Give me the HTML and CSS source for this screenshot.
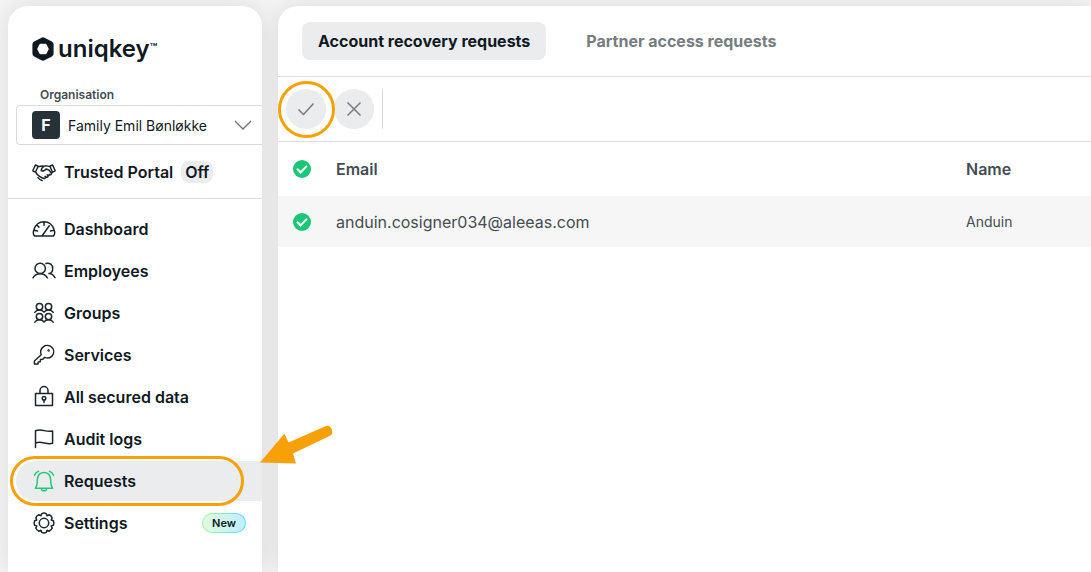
FILE: index.html
```html
<!DOCTYPE html>
<html lang="en">
<head>
<meta charset="utf-8">
<meta name="viewport" content="width=device-width, initial-scale=1">
<title>Uniqkey – Requests</title>
<link rel="stylesheet" href="styles.css">
</head>
<body>
<div class="app">
  <aside class="sidebar">
    <div class="logo">
      <svg class="logo-mark" viewBox="0 0 22 24" aria-hidden="true">
        <path fill="currentColor" fill-rule="evenodd" d="M9 .9a4 4 0 0 1 4 0l6.900 3.700A3.500 3.500 0 0 1 21.600 7.700v8.600a3.500 3.500 0 0 1-1.700 3.100L13 23.100a4 4 0 0 1-4 0L2.100 19.400A3.500 3.500 0 0 1 .4 16.300V7.700a3.500 3.500 0 0 1 1.700-3.100zM8.500 6.800Q7.800 6.900 7.400 7.600L5.500 11.300Q5.200 12 5.500 12.700L7.400 16.400Q7.800 17.100 8.500 17.200H13.500Q14.200 17.100 14.600 16.400L16.500 12.700Q16.800 12 16.500 11.300L14.600 7.600Q14.200 6.900 13.500 6.800z"/>
      </svg>
      <span class="logo-name">uniqkey</span><span class="logo-tm">™</span>
    </div>

    <label class="org-label" for="org">Organisation</label>
    <div class="org-field">
      <span class="org-avatar">F</span>
      <select class="org-select" id="org"><option>Family Emil Bønløkke</option></select>
      <svg class="org-chevron" viewBox="0 0 18 10" aria-hidden="true"><path d="M1 1l8 8 8-8"/></svg>
    </div>

    <a class="nav-item portal" href="#">
      <svg class="icon" viewBox="0 0 24 24" aria-hidden="true"><path d="M3.400 5 .8 10.800l2.600 1.400L6.200 6.300zM20.600 5l2.600 5.800-2.600 1.400-2.800-5.900zM6.200 6.500c2 .2 3.600-.9 5.600-.3M17.800 6.500c-2-.1-3.500-1.300-5.400-.4-1.800.8-3 2.500-3.200 4.400 1.800.9 3.600.1 4.800-1.500 2 .2 4.500 2.600 5.300 4.100.3 1.300-.9 2-1.900 1.400M3.500 12c2 3.200 5.500 5.700 8.400 6.500 1.200.2 1.800-.8 1.300-1.600M13 16.300l1.400.9c1.200.3 1.900-.8 1.400-1.700M15.200 14.800l1.500.9M20.500 12l-1.200 1.500M6 17.600c1.300 1.600 2.600 2.400 4.100 2.900"/></svg>
      <span>Trusted Portal</span>
      <span class="state">Off</span>
    </a>

    <nav class="nav">
      <a class="nav-item" href="#">
        <svg class="icon" viewBox="0 0 24 24" aria-hidden="true"><path d="M2.500 18.900C.8 17.200 1.200 14.700 1.900 12.700 3.400 8 7 4.700 12 4.700s8.600 3.300 10.100 8c.7 2 1.100 4.500-.6 6.200zM12 4.700v3.500M2.300 13.300l3.200.7M21.700 13.300l-3.200.7M5 8.300l2 1.800M10.300 18.500 17.300 8.800"/></svg>
        <span>Dashboard</span>
      </a>
      <a class="nav-item" href="#">
        <svg class="icon" viewBox="0 0 24 24" aria-hidden="true"><circle cx="8.200" cy="9.400" r="5.200"/><path d="M1 18.800c1.500-2.500 4-4.100 7.200-4.100s5.700 1.600 7.200 4.100M14 4.500c3.500-1.200 6.700 1.200 6.700 4.900 0 2.700-1.600 4.700-3.700 5.200 2.700.2 4.700 1.700 6 4.100"/></svg>
        <span>Employees</span>
      </a>
      <a class="nav-item" href="#">
        <svg class="icon" viewBox="0 0 24 24" aria-hidden="true"><circle cx="7.500" cy="5.800" r="3.200"/><circle cx="16.500" cy="5.800" r="3.200"/><circle cx="7.500" cy="15.600" r="3.200"/><circle cx="16.500" cy="15.600" r="3.200"/><path d="M2.800 11.300c1-1.600 2.600-2.300 4.700-2.300s3.600.8 4.500 2.200c.9-1.400 2.400-2.200 4.500-2.200s3.700.7 4.700 2.300M2.800 21.100c1-1.600 2.600-2.300 4.700-2.300s3.600.8 4.500 2.200c.9-1.400 2.400-2.200 4.500-2.200s3.700.7 4.700 2.300"/></svg>
        <span>Groups</span>
      </a>
      <a class="nav-item" href="#">
        <svg class="icon" viewBox="0 0 24 24" aria-hidden="true"><path d="M9.200 11.800C8 8.500 9 5.500 11.300 3.800c2.600-1.900 6.200-1.700 8.500.5 2.300 2.300 2.500 5.900.5 8.400-1.800 2.300-4.700 2.800-7.700 1.700l-1.800 1.800-2.300.2-.3 2.300-2 .3-.2 2H2.400v-3z"/><circle cx="16.600" cy="7.400" r=".5"/></svg>
        <span>Services</span>
      </a>
      <a class="nav-item" href="#">
        <svg class="icon" viewBox="0 0 24 24" aria-hidden="true"><path d="M3.500 8.500h17v12h-17zM8 8.500V5.500a4 4 0 0 1 8 0v3M12 15v2.500"/><circle cx="12" cy="13.300" r="1.800"/></svg>
        <span>All secured data</span>
      </a>
      <a class="nav-item" href="#">
        <svg class="icon" viewBox="0 0 24 24" aria-hidden="true"><path d="M3.500 20.600V3.800c6-2.800 10.500 2 17.100.2v12.300c-6.600 1.800-11.100-3-17.100-.2"/></svg>
        <span>Audit logs</span>
      </a>
      <a class="nav-item active" href="#" aria-current="page">
        <svg class="icon" viewBox="0 0 24 24" aria-hidden="true"><path d="M3.300 19.300c2.900-3 1.500-6.600 2.300-10.300C6.300 5.500 8.700 3.500 12 3.500s5.700 2 6.400 5.500c.8 3.700-.6 7.300 2.300 10.300zM9.400 19.600c.3 3 4.900 3 5.200 0M6.600 2.300C4.600 2.900 3.200 4.300 2.500 6.300M17.400 2.300c2 .6 3.400 2 4.100 4"/></svg>
        <span>Requests</span>
        <span class="marker marker-nav"></span>
        <svg class="arrow" viewBox="0 0 76 40" aria-hidden="true"><path d="M2 37.500 26.500 8.500 30.500 17.500 68 1c3-1 4.500.5 5.500 3 1.200 3 1.200 5-1 6.500L35 28.500 38 38.500z"/></svg>
      </a>
      <a class="nav-item" href="#">
        <svg class="icon" viewBox="0 0 24 24" aria-hidden="true"><circle cx="12" cy="12" r="4.700"/><path d="M9.800 2.600Q12 1.600 14.200 2.600L15 4.800 17.100 3.800Q19.300 4.600 20.200 6.900L19.200 9 21.400 9.800Q22.400 12 21.400 14.200L19.200 15 20.200 17.100Q19.400 19.300 17.100 20.200L15 19.200 14.200 21.400Q12 22.400 9.800 21.400L9 19.200 6.900 20.200Q4.700 19.400 3.800 17.100L4.800 15 2.600 14.200Q1.600 12 2.600 9.800L4.800 9 3.800 6.900Q4.600 4.700 6.900 3.800L9 4.800z"/></svg>
        <span>Settings</span>
        <span class="badge">New</span>
      </a>
    </nav>
  </aside>

  <main class="main">
    <div class="tabs" role="tablist">
      <button class="tab selected" role="tab" aria-selected="true">Account recovery requests</button>
      <button class="tab" role="tab" aria-selected="false">Partner access requests</button>
    </div>
    <div class="toolbar">
      <div class="action">
        <button class="round" aria-label="Approve"><svg viewBox="0 0 18 18" aria-hidden="true"><path d="M1.500 9.500 6.500 14.500 16.500 3.500"/></svg></button>
        <span class="marker marker-action"></span>
      </div>
      <button class="round" aria-label="Reject"><svg viewBox="0 0 18 18" aria-hidden="true"><path d="M2.500 2.500l13 13M15.500 2.500l-13 13"/></svg></button>
      <span class="separator"></span>
    </div>
    <table class="requests">
      <thead>
        <tr>
          <th class="col-check"><input class="tick" type="checkbox" aria-label="Select all" checked></th>
          <th>Email</th>
          <th class="col-name">Name</th>
        </tr>
      </thead>
      <tbody>
        <tr>
          <td><input class="tick" type="checkbox" aria-label="Select request" checked></td>
          <td>anduin.cosigner034@aleeas.com</td>
          <td class="name">Anduin</td>
        </tr>
      </tbody>
    </table>
  </main>
</div>
</body>
</html>
```

FILE: styles.css
```css
* {
  box-sizing: border-box;
}

body {
  margin: 0;
  background: #f4f4f4;
  color: #0f191f;
  font-family: Inter, "Liberation Sans", sans-serif;
  font-size: 16px;
}

button,
select {
  font: inherit;
  color: inherit;
}

.app {
  display: flex;
  gap: 16px;
  min-height: 100vh;
  padding: 6px 0 0 8px;
  overflow: hidden;
}

.sidebar,
.main {
  background: #fff;
  box-shadow: 0 0 24px rgba(0, 0, 0, 0.1);
}

.sidebar {
  flex: none;
  width: 254px;
  border-radius: 20px 20px 0 0;
}

.logo {
  display: flex;
  align-items: center;
  height: 82px;
  padding: 4px 24px 0;
}

.logo-mark {
  width: 22px;
  height: 24px;
  margin-right: 4px;
}

.logo-name {
  font-size: 24px;
  font-weight: 600;
  line-height: 32px;
}

.logo-tm {
  align-self: flex-start;
  margin-top: 32px;
  font-size: 12px;
  font-weight: 600;
  line-height: 12px;
}

.org-label {
  display: block;
  margin-left: 32px;
  color: #444d52;
  font-size: 12px;
  font-weight: 600;
  line-height: 14px;
}

.org-field {
  position: relative;
  display: flex;
  align-items: center;
  height: 40px;
  margin: 3px 0 0 8px;
  padding-left: 15px;
  border: 1px solid #d9dbdc;
  border-right: 0;
  border-radius: 4px 0 0 4px;
}

.org-avatar {
  display: grid;
  flex: none;
  place-items: center;
  width: 28px;
  height: 28px;
  border-radius: 4px;
  background: #263238;
  color: #fff;
  font-weight: 700;
}

.org-select {
  flex: 1;
  min-width: 0;
  height: 38px;
  padding: 0 32px 0 8px;
  border: 0;
  appearance: none;
  background: transparent;
  font-size: 14px;
}

.org-chevron {
  position: absolute;
  right: 10px;
  width: 18px;
  height: 10px;
  fill: none;
  stroke: #6c7478;
  stroke-width: 1.3;
  pointer-events: none;
}

.nav-item {
  position: relative;
  display: flex;
  align-items: center;
  gap: 8px;
  height: 40px;
  margin-left: 8px;
  padding: 0 16px;
  border-radius: 20px 0 0 20px;
  color: inherit;
  font-weight: 600;
  text-decoration: none;
}

.portal {
  margin-top: 7px;
}

.state {
  padding: 0 4px;
  border-radius: 8px;
  background: #ebecee;
  line-height: 22px;
}

.nav {
  display: flex;
  flex-direction: column;
  gap: 2px;
  margin-top: 6px;
  padding-top: 10px;
  border-top: 1px solid #dcdedf;
}

.active {
  background: #ebecee;
}

.icon {
  flex: none;
  width: 24px;
  height: 24px;
  fill: none;
  stroke: #1b262c;
  stroke-width: 1.5;
  stroke-linecap: round;
  stroke-linejoin: round;
}

.active .icon {
  stroke: #26c87c;
}

.badge {
  margin-left: auto;
  padding: 0 9px;
  border: 1px solid transparent;
  border-radius: 10px;
  background:
    linear-gradient(90deg, #dffdda, #bfeeff) padding-box,
    linear-gradient(90deg, #a9f5a3, #5fdcf5) border-box;
  font-size: 11px;
  line-height: 18px;
}

.marker {
  position: absolute;
  border: 3px solid #f9a006;
  pointer-events: none;
}

.marker-nav {
  inset: -5px 18px -5px -6px;
  border-radius: 25px;
}

.marker-action {
  inset: -8px -9px -9px -8px;
  border-radius: 50%;
}

.arrow {
  position: absolute;
  left: 242px;
  top: -36px;
  width: 76px;
  height: 40px;
  fill: #f9a006;
}

.main {
  flex: 1;
  min-width: 0;
  border-top-left-radius: 20px;
}

.tabs {
  display: flex;
  gap: 24px;
  padding: 16px 24px;
  border-bottom: 1px solid #dcdedf;
}

.tab {
  height: 38px;
  padding: 0 16px;
  border: 0;
  border-radius: 8px;
  background: transparent;
  color: #757d81;
  font-weight: 700;
}

.tab.selected {
  background: #ebecee;
  color: #0f191f;
}

.toolbar {
  display: flex;
  gap: 8px;
  padding: 12px 8px;
  border-bottom: 1px solid #dcdedf;
}

.action {
  position: relative;
}

.round {
  display: grid;
  place-items: center;
  width: 40px;
  height: 40px;
  padding: 0;
  border: 0;
  border-radius: 50%;
  background: #ebecee;
}

.round svg {
  width: 18px;
  height: 18px;
  fill: none;
  stroke: #757b7e;
  stroke-width: 1.5;
}

.separator {
  width: 1px;
  background: #d9dbdc;
}

.requests {
  width: 100%;
  border-collapse: collapse;
  table-layout: fixed;
  color: #444d52;
  text-align: left;
}

.requests th,
.requests td {
  padding: 0;
}

.requests th {
  height: 54px;
  font-weight: 600;
}

.requests td {
  height: 51px;
}

.requests tbody tr {
  background: #f6f6f6;
}

.col-check {
  width: 58px;
}

.col-name {
  width: 125px;
}

.requests .name {
  font-size: 14px;
}

.tick {
  position: relative;
  display: block;
  width: 18px;
  height: 18px;
  margin: 0 0 0 15px;
  border-radius: 50%;
  appearance: none;
  background: #19c776;
}

.tick:checked::after {
  content: "";
  position: absolute;
  left: 4px;
  top: 5px;
  width: 10px;
  height: 6px;
  border: solid #fff;
  border-width: 0 0 2px 2px;
  box-sizing: border-box;
  transform: rotate(-45deg);
}
```
